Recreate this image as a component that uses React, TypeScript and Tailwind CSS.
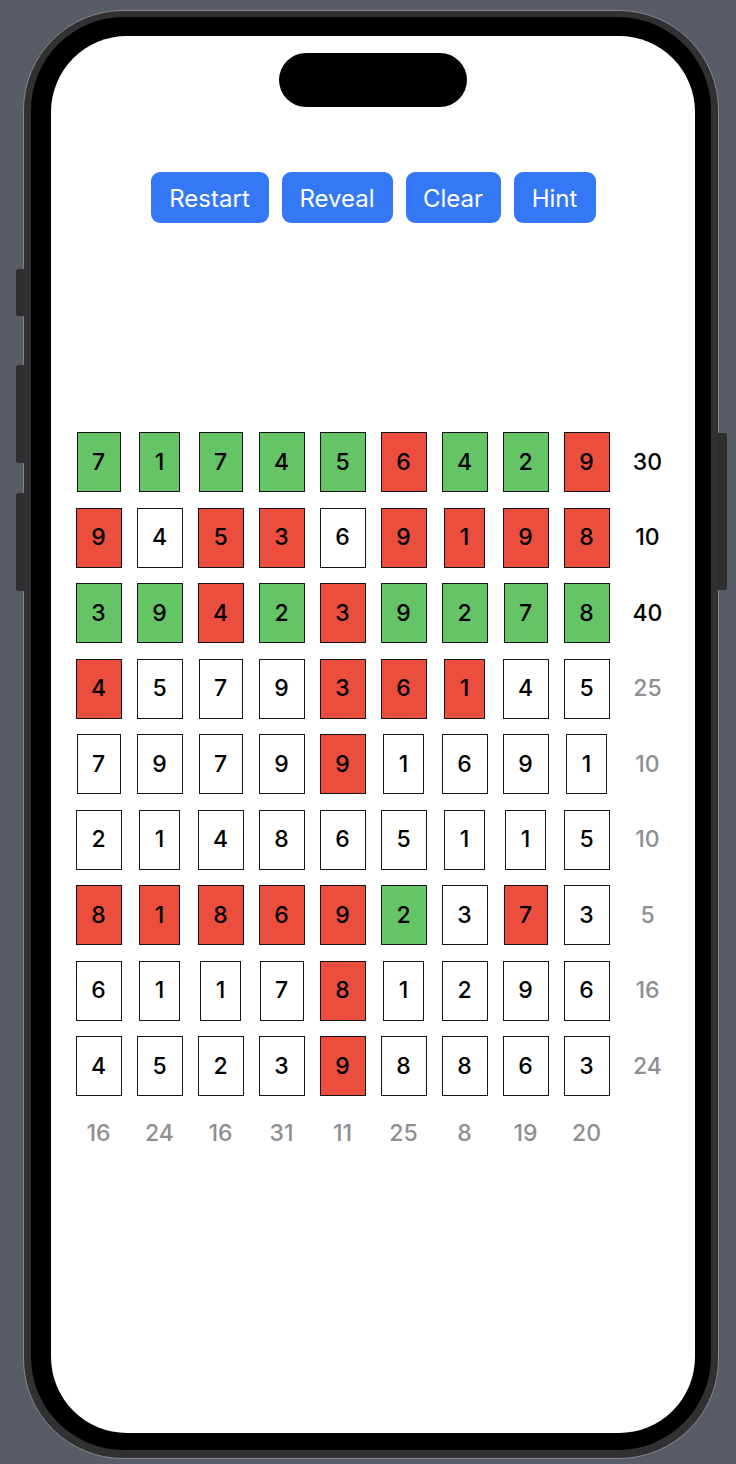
import React from "react";

type C = "g" | "r" | "w";
const rows: { cells: [string, C][]; sum: string; done: boolean }[] = [
  { cells: [["7","g"],["1","g"],["7","g"],["4","g"],["5","g"],["6","r"],["4","g"],["2","g"],["9","r"]], sum: "30", done: true },
  { cells: [["9","r"],["4","w"],["5","r"],["3","r"],["6","w"],["9","r"],["1","r"],["9","r"],["8","r"]], sum: "10", done: true },
  { cells: [["3","g"],["9","g"],["4","r"],["2","g"],["3","r"],["9","g"],["2","g"],["7","g"],["8","g"]], sum: "40", done: true },
  { cells: [["4","r"],["5","w"],["7","w"],["9","w"],["3","r"],["6","r"],["1","r"],["4","w"],["5","w"]], sum: "25", done: false },
  { cells: [["7","w"],["9","w"],["7","w"],["9","w"],["9","r"],["1","w"],["6","w"],["9","w"],["1","w"]], sum: "10", done: false },
  { cells: [["2","w"],["1","w"],["4","w"],["8","w"],["6","w"],["5","w"],["1","w"],["1","w"],["5","w"]], sum: "10", done: false },
  { cells: [["8","r"],["1","r"],["8","r"],["6","r"],["9","r"],["2","g"],["3","w"],["7","r"],["3","w"]], sum: "5", done: false },
  { cells: [["6","w"],["1","w"],["1","w"],["7","w"],["8","r"],["1","w"],["2","w"],["9","w"],["6","w"]], sum: "16", done: false },
  { cells: [["4","w"],["5","w"],["2","w"],["3","w"],["9","r"],["8","w"],["8","w"],["6","w"],["3","w"]], sum: "24", done: false },
];
const colSums = ["16", "24", "16", "31", "11", "25", "8", "19", "20"];

const bg: Record<C, string> = {
  g: "bg-[#65c466]",
  r: "bg-[#eb4e3d]",
  w: "bg-white",
};
const widthFor = (d: string) =>
  d === "1" ? "w-[41px]" : d === "7" ? "w-[44px]" : "w-[46px]";

const font = { fontFamily: "Inter, 'Noto Sans', sans-serif" };

export default function App() {
  return (
    <div className="relative w-[736px] h-[1464px] bg-[#585c64] overflow-hidden" style={font}>
      {/* side buttons */}
      <div className="absolute left-[16px] top-[269px] w-[8px] h-[47px] rounded-l-[2px] bg-[#2e2e30]" />
      <div className="absolute left-[16px] top-[365px] w-[8px] h-[98px] rounded-l-[2px] bg-[#2e2e30]" />
      <div className="absolute left-[16px] top-[493px] w-[8px] h-[98px] rounded-l-[2px] bg-[#2e2e30]" />
      <div className="absolute left-[718px] top-[433px] w-[9px] h-[157px] rounded-r-[2px] bg-[#2e2e30]" />

      <div className="pt-[10px] pl-[23px]">
        <div className="w-[696px] h-[1449px] rounded-[100px] border border-[#85858a] bg-[#313133] pt-[6px] pb-[8px] pl-[7px] pr-[7px]">
          <div className="w-full h-full rounded-[93px] bg-black pt-[19px] pb-[17px] pl-[20px] pr-[16px]">
            <div className="w-[644px] h-[1397px] rounded-[76px] bg-white overflow-hidden flex flex-col items-center">
              {/* dynamic island */}
              <div className="mt-[17px] w-[188px] h-[54px] rounded-full bg-black" />

              {/* buttons */}
              <div className="mt-[65px] flex gap-[13px] text-white text-[24px] leading-none">
                <button className="w-[118px] h-[51px] rounded-[9px] bg-[#3478f6] pt-[2px]">Restart</button>
                <button className="w-[111px] h-[51px] rounded-[9px] bg-[#3478f6] pt-[2px]">Reveal</button>
                <button className="w-[95px] h-[51px] rounded-[9px] bg-[#3478f6] pt-[2px]">Clear</button>
                <button className="w-[82px] h-[51px] rounded-[9px] bg-[#3478f6] pt-[2px]">Hint</button>
              </div>

              {/* grid */}
              <div className="mt-[209px] grid grid-cols-[repeat(10,61px)] gap-y-[15.5px]">
                {rows.map((row, ri) => (
                  <React.Fragment key={ri}>
                    {row.cells.map(([d, c], ci) => (
                      <div key={ci} className="flex justify-center">
                        <div
                          className={`${widthFor(d)} h-[60px] ${bg[c]} border-[1.5px] border-[#151515] flex items-center justify-center text-[23px] font-medium text-black`}
                        >
                          {d}
                        </div>
                      </div>
                    ))}
                    <div
                      className={`flex items-center justify-center text-[23px] font-medium ${row.done ? "text-black" : "text-[#8e8e93]"}`}
                    >
                      {row.sum}
                    </div>
                  </React.Fragment>
                ))}
              </div>
              <div className="mt-[20px] grid grid-cols-[repeat(10,61px)] h-[30px]">
                {colSums.map((s, i) => (
                  <div key={i} className="flex items-center justify-center text-[23px] font-medium text-[#8e8e93]">
                    {s}
                  </div>
                ))}
                <div />
              </div>
            </div>
          </div>
        </div>
      </div>
    </div>
  );
}
